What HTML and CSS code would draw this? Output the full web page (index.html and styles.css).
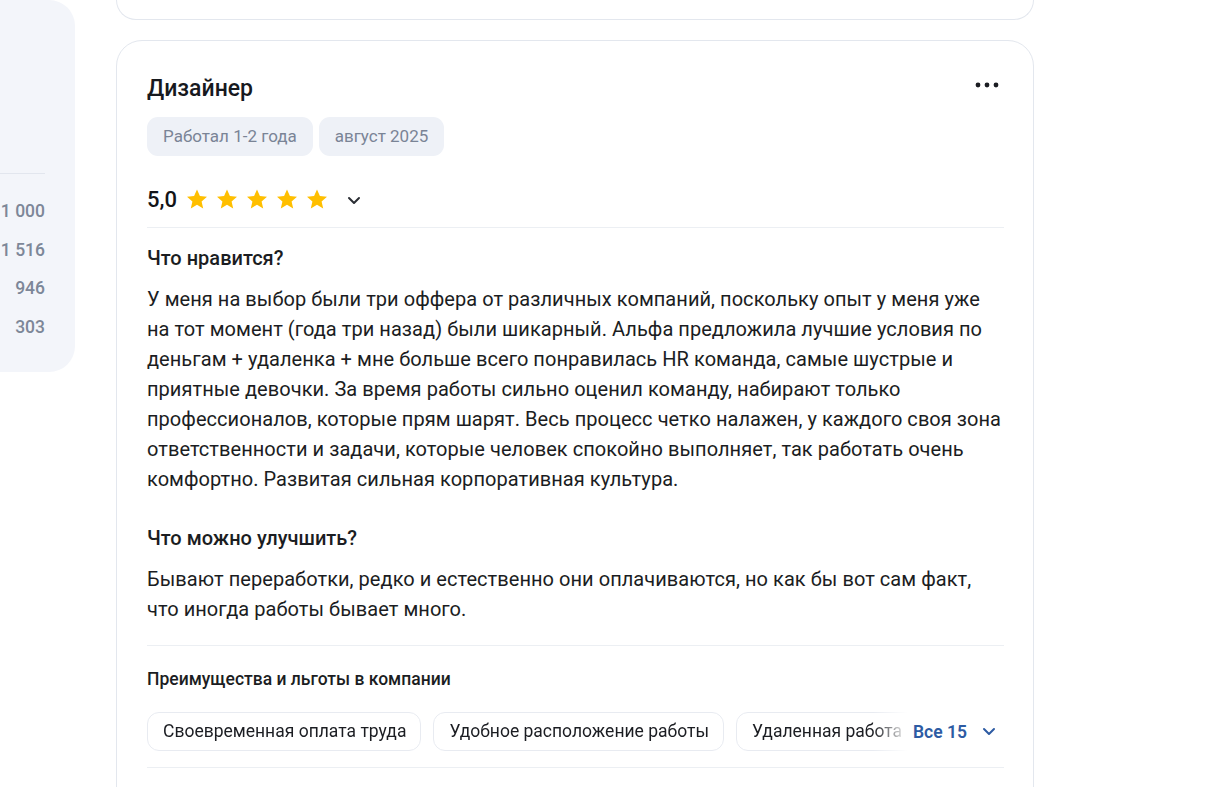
FILE: index.html
```html
<!DOCTYPE html>
<html lang="ru">
<head>
<meta charset="utf-8">
<link rel="stylesheet" href="styles.css">
</head>
<body>
<div class="page">
  <aside class="side">
    <div class="side-top"></div>
    <ul class="side-list">
      <li>1 000</li>
      <li>1 516</li>
      <li>946</li>
      <li>303</li>
    </ul>
  </aside>
  <main class="feed">
    <div class="card card-prev"></div>
    <article class="card review">
      <header class="rev-head">
        <h2 class="rev-title">Дизайнер</h2>
        <button class="more" aria-label="Ещё">
          <svg width="24" height="6" viewBox="0 0 24 6"><circle cx="3" cy="3" r="2.4" fill="#1b1d22"/><circle cx="12" cy="3" r="2.4" fill="#1b1d22"/><circle cx="21" cy="3" r="2.4" fill="#1b1d22"/></svg>
        </button>
      </header>
      <div class="tags">
        <span class="tag">Работал 1-2 года</span>
        <span class="tag">август 2025</span>
      </div>
      <div class="rating">
        <span class="score">5,0</span>
        <span class="stars">
          <svg class="star" viewBox="0 0 24 24"><path d="M12 2.5l2.9 6.6 7.1.6-5.4 4.7 1.6 7-6.2-3.7-6.2 3.7 1.6-7L2 9.7l7.1-.6z"/></svg>
          <svg class="star" viewBox="0 0 24 24"><path d="M12 2.5l2.9 6.6 7.1.6-5.4 4.7 1.6 7-6.2-3.7-6.2 3.7 1.6-7L2 9.7l7.1-.6z"/></svg>
          <svg class="star" viewBox="0 0 24 24"><path d="M12 2.5l2.9 6.6 7.1.6-5.4 4.7 1.6 7-6.2-3.7-6.2 3.7 1.6-7L2 9.7l7.1-.6z"/></svg>
          <svg class="star" viewBox="0 0 24 24"><path d="M12 2.5l2.9 6.6 7.1.6-5.4 4.7 1.6 7-6.2-3.7-6.2 3.7 1.6-7L2 9.7l7.1-.6z"/></svg>
          <svg class="star" viewBox="0 0 24 24"><path d="M12 2.5l2.9 6.6 7.1.6-5.4 4.7 1.6 7-6.2-3.7-6.2 3.7 1.6-7L2 9.7l7.1-.6z"/></svg>
        </span>
        <svg class="chev" width="14" height="9" viewBox="0 0 14 9"><path d="M2 2l5 5 5-5" fill="none" stroke="#2b2e34" stroke-width="2" stroke-linecap="round" stroke-linejoin="round"/></svg>
      </div>
      <section class="block">
        <h3 class="block-title">Что нравится?</h3>
        <p class="block-text">У меня на выбор были три оффера от различных компаний, поскольку опыт у меня уже на тот момент (года три назад) были шикарный. Альфа предложила лучшие условия по деньгам + удаленка + мне больше всего понравилась HR команда, самые шустрые и приятные девочки. За время работы сильно оценил команду, набирают только профессионалов, которые прям шарят. Весь процесс четко налажен, у каждого своя зона ответственности и задачи, которые человек спокойно выполняет, так работать очень комфортно. Развитая сильная корпоративная культура.</p>
      </section>
      <section class="block block-second">
        <h3 class="block-title">Что можно улучшить?</h3>
        <p class="block-text">Бывают переработки, редко и естественно они оплачиваются, но как бы вот сам факт, что иногда работы бывает много.</p>
      </section>
      <section class="perks">
        <h4 class="perks-title">Преимущества и льготы в компании</h4>
        <div class="perks-row">
          <div class="chips">
            <span class="chip">Своевременная оплата труда</span>
            <span class="chip">Удобное расположение работы</span>
            <span class="chip">Удаленная работа</span>
            <span class="chip">Обучение</span>
          </div>
          <button class="all">Все 15
            <svg width="14" height="9" viewBox="0 0 14 9"><path d="M2 2l5 5 5-5" fill="none" stroke="#2d5ba3" stroke-width="2" stroke-linecap="round" stroke-linejoin="round"/></svg>
          </button>
        </div>
      </section>
    </article>
  </main>
</div>
</body>
</html>
```

FILE: styles.css
```css
* { box-sizing: border-box; }
html, body { margin: 0; padding: 0; background: #fff; }
body {
  font-family: Roboto, "Noto Sans", Arial, sans-serif;
  color: #1b1d22;
  width: 1207px;
  height: 787px;
  overflow: hidden;
}
.page {
  display: flex;
  align-items: flex-start;
  gap: 41px;
}
.side {
  width: 75px;
  height: 372px;
  background: #f3f5fa;
  border-radius: 0 26px 26px 0;
  padding-top: 173px;
  flex-shrink: 0;
}
.side-top {
  width: 45px;
  height: 1px;
  background: #e2e6ee;
}
.side-list {
  list-style: none;
  margin: 0;
  padding: 25px 30px 0 0;
  text-align: right;
  font-size: 17.5px;
  font-weight: 500;
  color: #7d8798;
}
.side-list li {
  height: 38.7px;
  line-height: 24px;
}
.feed {
  width: 918px;
  display: flex;
  flex-direction: column;
  gap: 20px;
}
.card {
  border: 1px solid #e3e7ee;
  border-radius: 26px;
  background: #fff;
}
.card-prev {
  height: 20px;
  border-top: none;
  border-radius: 0 0 26px 26px;
}
.review {
  padding: 30px 29px 0 30px;
  min-height: 800px;
}
.rev-head {
  display: flex;
  justify-content: space-between;
  align-items: center;
}
.rev-title {
  margin: 0;
  font-size: 23px;
  font-weight: 500;
  line-height: 34px;
  padding-top: 1px;
  color: #17191e;
}
.more {
  border: none;
  background: none;
  padding: 0;
  margin-right: 5px;
  margin-top: -8px;
  display: flex;
}
.tags {
  display: flex;
  gap: 6px;
  margin-top: 11px;
}
.tag {
  background: #eef1f7;
  color: #7a8496;
  font-size: 17px;
  height: 39px;
  line-height: 39px;
  padding: 0 16px;
  border-radius: 11px;
}
.rating {
  display: flex;
  align-items: center;
  margin-top: 28px;
  height: 30px;
}
.score {
  font-size: 22px;
  font-weight: 500;
  color: #121418;
  margin-right: 8px;
}
.stars {
  display: flex;
  gap: 6px;
}
.star {
  width: 24px;
  height: 24px;
  fill: #ffbf00;
}
.chev { margin-left: 18px; margin-top: 2px; }
.block {
  border-top: 1px solid #eceff3;
  margin-top: 13px;
  padding-top: 17px;
}
.block-second {
  border-top: none;
  margin-top: 0;
  padding-top: 31px;
}
.block-title {
  margin: 0;
  font-size: 20px;
  font-weight: 500;
  line-height: 26px;
}
.block-text {
  margin: 13px 0 0;
  font-size: 20px;
  letter-spacing: 0.05px;
  line-height: 30px;
  color: #1b1d22;
}
.perks {
  border-top: 1px solid #eceff3;
  margin-top: 21px;
  padding-top: 21px;
  border-bottom: 1px solid #eceff3;
  padding-bottom: 16px;
}
.perks-title {
  margin: 0;
  font-size: 17.5px;
  font-weight: 500;
  line-height: 24px;
}
.perks-row {
  display: flex;
  align-items: center;
  margin-top: 21px;
}
.chips {
  flex: 1;
  display: flex;
  gap: 12px;
  overflow: hidden;
  white-space: nowrap;
  -webkit-mask-image: linear-gradient(to right, #000 calc(100% - 40px), transparent calc(100% - 5px));
  mask-image: linear-gradient(to right, #000 calc(100% - 40px), transparent calc(100% - 5px));
}
.chip {
  flex-shrink: 0;
  border: 1px solid #e8ebf1;
  border-radius: 12px;
  height: 39px;
  line-height: 37px;
  padding: 0 14px 0 15px;
  font-size: 17.5px;
  color: #1b1d22;
}
.all {
  border: none;
  background: none;
  font-family: inherit;
  font-size: 17.5px;
  font-weight: 600;
  color: #2d5ba3;
  display: flex;
  align-items: center;
  gap: 15px;
  padding: 0 8px 0 0;
  margin-left: 0;
}
```
